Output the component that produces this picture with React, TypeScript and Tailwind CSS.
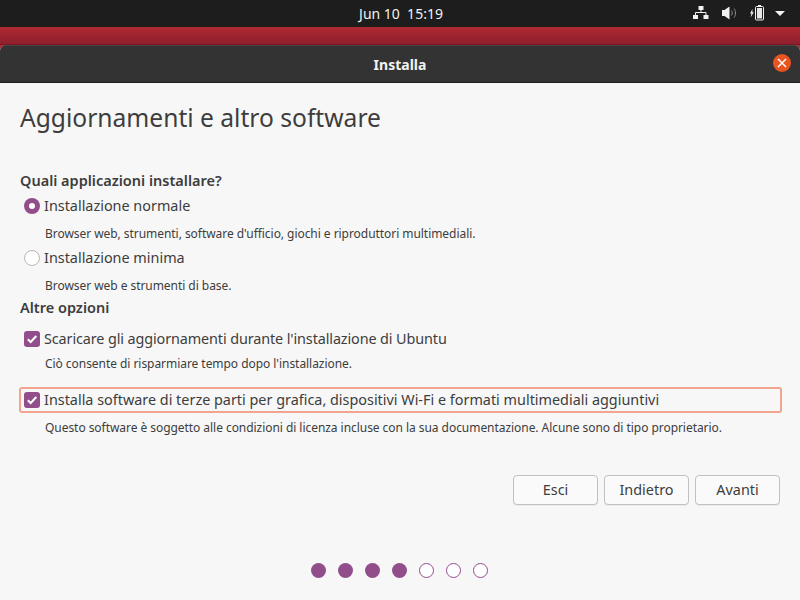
const Radio = ({ checked }: { checked?: boolean }) => (
	<span
		className={
			checked
				? "flex items-center justify-center w-4 h-4 rounded-full bg-[#924d8b]"
				: "w-4 h-4 rounded-full bg-white border border-[#b9b6b2]"
		}
	>
		{checked && <span className="w-[6px] h-[6px] rounded-full bg-white" />}
	</span>
);

const Check = () => (
	<span className="flex items-center justify-center w-4 h-4 rounded-[3px] bg-[#924d8b]">
		<svg width="12" height="12" viewBox="0 0 12 12" fill="none">
			<path d="M1.8 6.2 4.7 9 10.3 3" stroke="#fff" strokeWidth="2" />
		</svg>
	</span>
);

const Label = ({ children }: { children: string }) => (
	<span className="mb-px text-[14.4px] whitespace-nowrap text-[#3d3d3d]">{children}</span>
);

const Desc = ({ children }: { children: string }) => (
	<p className="h-5 pt-0.5 pl-[25px] flex items-center text-[12px] tracking-[-0.05px] text-[#3d3d3d]">
		{children}
	</p>
);

const Heading = ({ children }: { children: string }) => (
	<h3 className="h-6 pb-px flex items-center text-[14.5px] font-semibold text-[#3d3d3d]">
		{children}
	</h3>
);

const NetworkIcon = () => (
	<svg width="16" height="16" viewBox="0 0 16 16" fill="#f2f2f2">
		<rect x="5.500" y="1" width="5" height="4" />
		<rect x="0" y="10" width="5" height="4" />
		<rect x="10.500" y="10" width="5" height="4" />
		<path d="M8 5v3M2.500 10V7.500h10.500V10" stroke="#f2f2f2" fill="none" />
	</svg>
);

const VolumeIcon = () => (
	<svg width="16" height="16" viewBox="0 0 16 16" fill="none">
		<path d="M1 5h2.500L8.500 1.500v13L3.500 11H1z" fill="#f2f2f2" />
		<path d="M10.500 5.500c1 1.500 1 3.500 0 5M13 3.500c2 2.500 2 6.500 0 9" stroke="#8f8f8f" />
	</svg>
);

const BatteryIcon = () => (
	<svg width="16" height="16" viewBox="0 0 16 16" fill="none">
		<path d="M3.500 4 1 8.500h1.500L1.500 12.500 4.800 7.300H3.300z" fill="#f2f2f2" />
		<rect x="6.500" y="1.500" width="8" height="13.500" rx="1" stroke="#f2f2f2" />
		<rect x="8" y="3" width="5" height="10.500" fill="#e6e6e6" />
		<rect x="9" y="0" width="3" height="1.500" fill="#f2f2f2" />
	</svg>
);

const Button = ({ children }: { children: string }) => (
	<button
		type="button"
		className="w-[85px] h-[30px] rounded-[4px] border border-[#c4c1bd] bg-[#fafafa] text-[14.4px] text-[#3d3d3d] shadow-[0_1px_0_rgba(0,0,0,0.05)]"
	>
		{children}
	</button>
);

const App = () => {
	return (
		<div className="w-[800px] h-[600px] flex flex-col overflow-hidden bg-gradient-to-b from-[#ae2a32] to-[#8c1c2c] font-['Noto_Sans',sans-serif] text-[14px]">
			{/* top bar */}
			<div className="relative h-[27px] shrink-0 flex items-center justify-center bg-[#1d1d1d] text-[#f2f2f2] text-[14px]">
				<span className="ml-0.5 whitespace-pre">Jun 10  15:19</span>
				<div className="absolute right-[15px] top-[5px] flex items-center">
					<NetworkIcon />
					<span className="w-3" />
					<VolumeIcon />
					<span className="w-3" />
					<BatteryIcon />
					<span className="w-[10px]" />
					<span className="w-0 h-0 border-x-[5px] border-x-transparent border-t-[5px] border-t-[#f2f2f2]" />
				</div>
			</div>

			<div className="h-[18px] shrink-0 bg-gradient-to-b from-[#ae2a32] to-[#8f1e2d] border-b border-b-[#7c1524]" />

			{/* window */}
			<div className="flex-1 flex flex-col rounded-t-[6px] overflow-hidden bg-[#f7f7f7]">
				<div className="relative h-[38px] shrink-0 flex items-center justify-center bg-[#333333] border-t border-t-[#454545] border-b border-b-[#1d1d1d]">
					<span className="text-[14px] font-bold text-[#f2f2f2]">Installa</span>
					<span className="absolute right-[9px] top-[8px] w-[18px] h-[18px] rounded-full bg-[#e95420] flex items-center justify-center">
						<svg width="10" height="10" viewBox="0 0 10 10" fill="none">
							<path d="M1 1l8 8M9 1l-8 8" stroke="#fff" strokeWidth="1.500" />
						</svg>
					</span>
				</div>

				<div className="flex-1 flex flex-col pl-5 pr-5">
					<h1 className="h-[70px] flex items-center text-[24.6px] text-[#3d3d3d]">
						Aggiornamenti e altro software
					</h1>
					<div className="mt-4">
						<Heading>Quali applicazioni installare?</Heading>
					</div>
					<label className="mt-px h-6 pl-1 flex items-center gap-1">
						<Radio checked />
						<Label>Installazione normale</Label>
					</label>
					<div className="mt-[5px]">
						<Desc>Browser web, strumenti, software d'ufficio, giochi e riproduttori multimediali.</Desc>
					</div>
					<label className="mt-[3px] h-6 pl-1 flex items-center gap-1">
						<Radio />
						<Label>Installazione minima</Label>
					</label>
					<div className="mt-[5px]">
						<Desc>Browser web e strumenti di base.</Desc>
					</div>
					<div className="mt-px">
						<Heading>Altre opzioni</Heading>
					</div>
					<label className="mt-[7px] h-6 pl-1 flex items-center gap-1 tracking-[-0.11px]">
						<Check />
						<Label>Scaricare gli aggiornamenti durante l'installazione di Ubuntu</Label>
					</label>
					<div className="mt-[2px]">
						<Desc>Ciò consente di risparmiare tempo dopo l'installazione.</Desc>
					</div>
					<label className="mt-[14px] h-[26px] -ml-px -mr-[2px] pl-[3px] flex items-center gap-1 rounded-[3px] border-2 border-[#f3a48f]">
						<Check />
						<Label>Installa software di terze parti per grafica, dispositivi Wi-Fi e formati multimediali aggiuntivi</Label>
					</label>
					<div className="mt-1">
						<Desc>Questo software è soggetto alle condizioni di licenza incluse con la sua documentazione. Alcune sono di tipo proprietario.</Desc>
					</div>
					<div className="mt-[38px] flex justify-end gap-[6px]">
						<Button>Esci</Button>
						<Button>Indietro</Button>
						<Button>Avanti</Button>
					</div>
					<div className="mt-[58px] pr-px flex justify-center gap-3">
						<span className="w-[15px] h-[15px] rounded-full bg-[#924d8b]" />
						<span className="w-[15px] h-[15px] rounded-full bg-[#924d8b]" />
						<span className="w-[15px] h-[15px] rounded-full bg-[#924d8b]" />
						<span className="w-[15px] h-[15px] rounded-full bg-[#924d8b]" />
						<span className="w-[15px] h-[15px] rounded-full bg-white border border-[#924d8b]" />
						<span className="w-[15px] h-[15px] rounded-full bg-white border border-[#924d8b]" />
						<span className="w-[15px] h-[15px] rounded-full bg-white border border-[#924d8b]" />
					</div>
				</div>
			</div>
		</div>
	);
};

export default App;
